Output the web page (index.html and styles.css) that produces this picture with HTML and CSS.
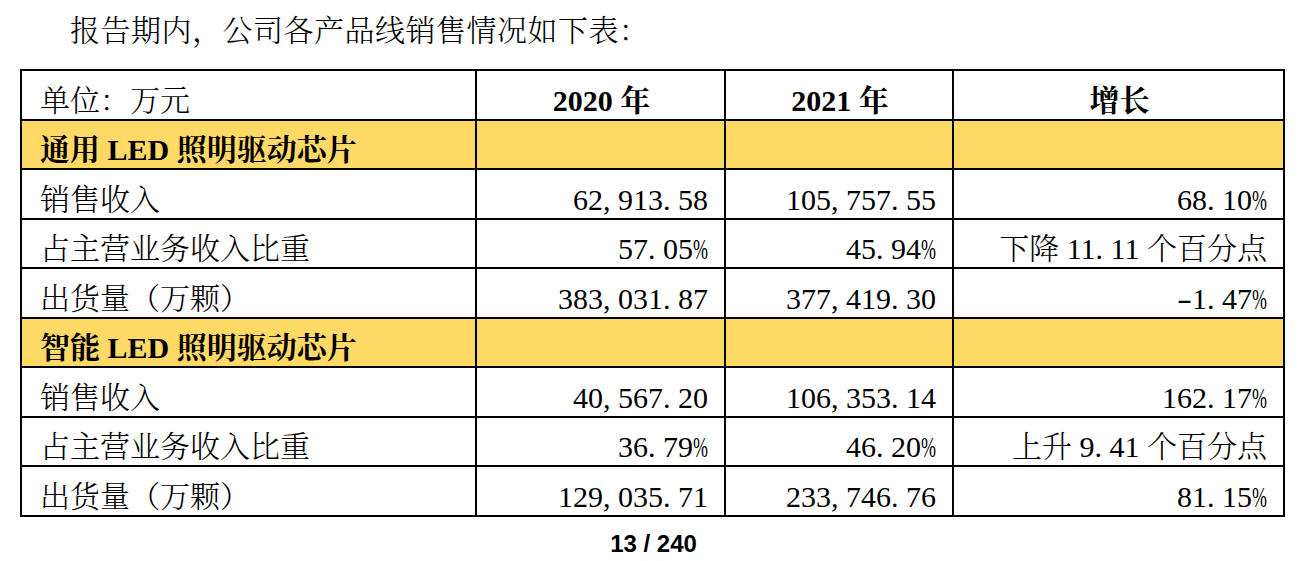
FILE: index.html
```html
<!DOCTYPE html>
<html lang="zh-CN">
<head>
<meta charset="utf-8">
<title>产品线销售情况</title>
<link rel="stylesheet" href="styles.css">
</head>
<body>
<p class="intro">报告期内，公司各产品线销售情况如下表：</p>
<table class="sales">
  <colgroup>
    <col class="c1"><col class="c2"><col class="c3"><col class="c4">
  </colgroup>
  <tr class="head">
    <td>单位：万元</td>
    <td class="center b">2020 年</td>
    <td class="center b">2021 年</td>
    <td class="center b">增长</td>
  </tr>
  <tr class="section">
    <td class="b">通用 LED 照明驱动芯片</td><td></td><td></td><td></td>
  </tr>
  <tr>
    <td>销售收入</td>
    <td class="num">62<span class="p">,</span>913<span class="p">.</span>58</td>
    <td class="num">105<span class="p">,</span>757<span class="p">.</span>55</td>
    <td class="num">68<span class="p">.</span>10<span class="pc">%</span></td>
  </tr>
  <tr>
    <td>占主营业务收入比重</td>
    <td class="num">57<span class="p">.</span>05<span class="pc">%</span></td>
    <td class="num">45<span class="p">.</span>94<span class="pc">%</span></td>
    <td class="num">下降 11<span class="p">.</span>11 个百分点</td>
  </tr>
  <tr>
    <td>出货量（万颗）</td>
    <td class="num">383<span class="p">,</span>031<span class="p">.</span>87</td>
    <td class="num">377<span class="p">,</span>419<span class="p">.</span>30</td>
    <td class="num"><span class="m">-</span>1<span class="p">.</span>47<span class="pc">%</span></td>
  </tr>
  <tr class="section">
    <td class="b">智能 LED 照明驱动芯片</td><td></td><td></td><td></td>
  </tr>
  <tr>
    <td>销售收入</td>
    <td class="num">40<span class="p">,</span>567<span class="p">.</span>20</td>
    <td class="num">106<span class="p">,</span>353<span class="p">.</span>14</td>
    <td class="num">162<span class="p">.</span>17<span class="pc">%</span></td>
  </tr>
  <tr>
    <td>占主营业务收入比重</td>
    <td class="num">36<span class="p">.</span>79<span class="pc">%</span></td>
    <td class="num">46<span class="p">.</span>20<span class="pc">%</span></td>
    <td class="num">上升 9<span class="p">.</span>41 个百分点</td>
  </tr>
  <tr>
    <td>出货量（万颗）</td>
    <td class="num">129<span class="p">,</span>035<span class="p">.</span>71</td>
    <td class="num">233<span class="p">,</span>746<span class="p">.</span>76</td>
    <td class="num">81<span class="p">.</span>15<span class="pc">%</span></td>
  </tr>
</table>
<p class="page">13 / 240</p>
</body>
</html>
```

FILE: styles.css
```css
html, body {
  margin: 0;
  padding: 0;
  background: #ffffff;
}

body {
  width: 1307px;
  color: #000000;
  font-family: "Liberation Serif", "Noto Serif CJK SC", "Noto Sans CJK SC", serif;
  font-size: 30px;
  font-weight: 300;
}

.intro {
  margin: 0;
  padding: 16px 0 0 70px;
  line-height: 30px;
  letter-spacing: 0.5px;
}

.sales {
  margin: 23px 0 0 20px;
  border-collapse: collapse;
  table-layout: fixed;
  width: 1263px;
  border: 2px solid #000000;
}

.c1 { width: 455px; }
.c2 { width: 249px; }
.c3 { width: 228px; }
.c4 { width: 331px; }

.sales td {
  border: 2px solid #000000;
  height: 47.5px;
  padding: 0 16px 3px 18px;
  line-height: 30px;
  vertical-align: bottom;
  white-space: nowrap;
  box-sizing: border-box;
}

.sales tr {
  height: 49.5px;
}

.section td {
  background: #ffd966;
}

.b {
  font-weight: 700;
}

.center {
  text-align: center;
}

.sales td.num {
  text-align: right;
}

.p {
  display: inline-block;
  width: 0.5em;
  text-align: left;
}

.m {
  display: inline-block;
  width: 0.5em;
  text-align: center;
  transform: scaleX(1.5);
}

.pc {
  display: inline-block;
  width: 0.5em;
  transform: scaleX(0.6);
  transform-origin: left center;
  text-align: left;
}

.page {
  margin: 15px 0 0;
  text-align: center;
  font-family: "Liberation Sans", Arial, sans-serif;
  font-weight: 700;
  font-size: 24px;
  line-height: 24px;
}
```
